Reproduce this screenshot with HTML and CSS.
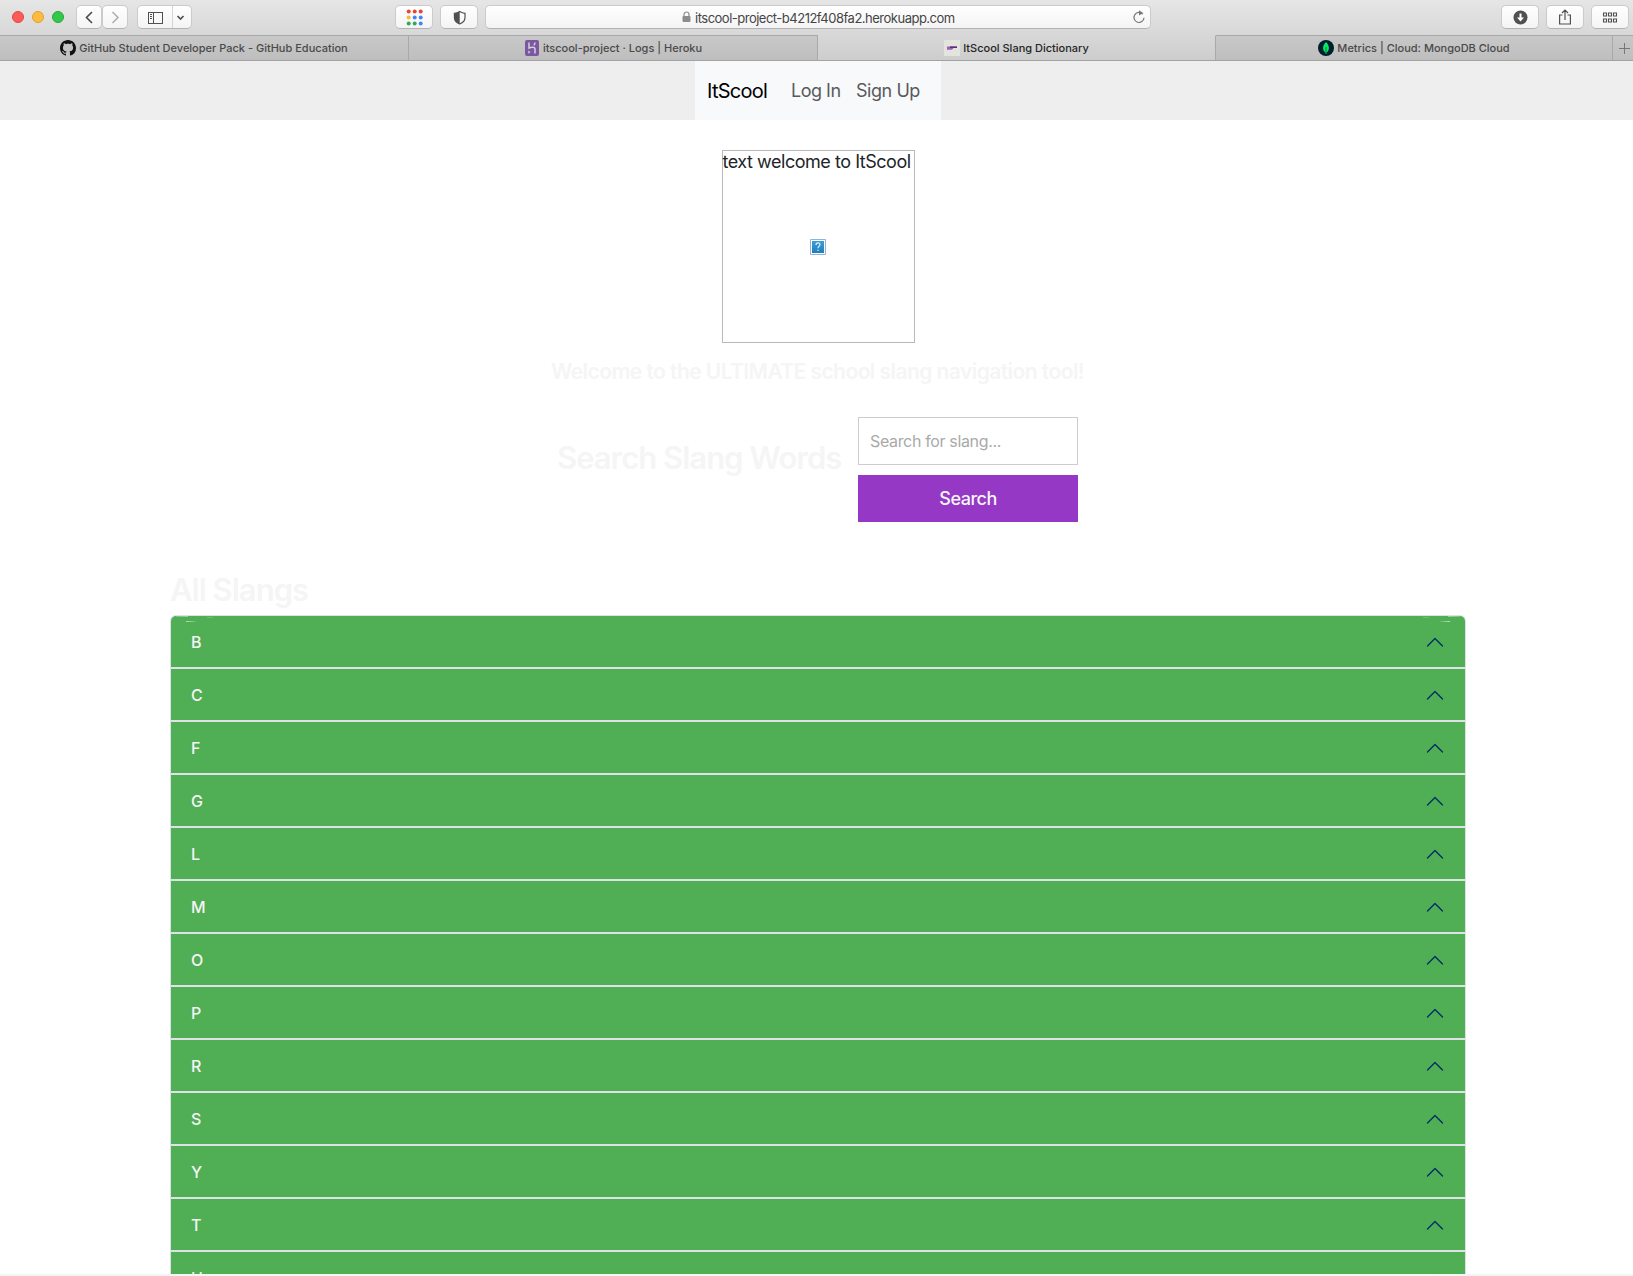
FILE: index.html
```
<!DOCTYPE html>
<html lang="en">
<head>
<meta charset="utf-8">
<title>ItScool Slang Dictionary</title>
<link rel="stylesheet" href="styles.css">
</head>
<body>
<header class="browser">
  <div class="toolbar">
    <div class="lights"><i class="light red"></i><i class="light amber"></i><i class="light green"></i></div>
    <div class="history">
      <span class="btn nav"><svg width="26" height="23" viewBox="0 0 26 23" fill="none" stroke="#4a4a4a" stroke-width="1.6"><path d="M16 6l-5.500 5.500L16 17"/></svg></span>
      <span class="btn nav"><svg width="26" height="23" viewBox="0 0 26 23" fill="none" stroke="#a8a8a8" stroke-width="1.400"><path d="M10.500 6l5.500 5.500L10.500 17"/></svg></span>
    </div>
    <span class="btn sidebar">
      <svg width="54" height="23" viewBox="0 0 54 23" fill="none" stroke="#505050"><rect x="10.500" y="6.500" width="14" height="11"/><path d="M15.500 6v12M12 8.500h2M12 10.500h2M12 12.500h2"/><path stroke="#d4d4d4" d="M34.500 0v23"/><path stroke-width="1.700" d="M39.500 10l3 3 3-3"/></svg>
    </span>
    <span class="btn tool apps"><svg width="38" height="23" viewBox="0 0 38 23"><g transform="translate(.7)"><g fill="#ea4335"><circle cx="13" cy="5.500" r="2"/><circle cx="19" cy="5.500" r="2"/><circle cx="25" cy="5.500" r="2"/></g><circle cx="13" cy="11.500" r="2" fill="#fbbc2c"/><g fill="#4285f4"><circle cx="19" cy="11.500" r="2"/><circle cx="25" cy="11.500" r="2"/><circle cx="25" cy="17.500" r="2"/></g><g fill="#34a853"><circle cx="13" cy="17.500" r="2"/><circle cx="19" cy="17.500" r="2"/></g></g></svg></span>
    <span class="btn tool shield"><svg width="38" height="23" viewBox="0 0 38 23"><g transform="translate(.7)"><path d="M19 5.500c2 1.300 3.500 1.700 5.300 1.800v4.200c0 3.200-2.200 5.300-5.300 6.500-3.100-1.200-5.300-3.300-5.300-6.500V7.300c1.800-.1 3.300-.5 5.300-1.800z" fill="none" stroke="#505050" stroke-width="1.200"/><path d="M19 5.500V18c-3.100-1.200-5.300-3.300-5.300-6.500V7.300c1.800-.1 3.300-.5 5.300-1.800z" fill="#505050"/></g></svg></span>
    <div class="btn url">
      <svg class="lock" width="9" height="12" viewBox="0 0 9 12"><rect x="0.500" y="5" width="8" height="6" rx="1" fill="#8c8c8c"/><path d="M2 5.500V3.500a2.500 2.500 0 0 1 5 0v2" fill="none" stroke="#8c8c8c" stroke-width="1.200"/></svg>
      <span class="address">itscool-project-b4212f408fa2.herokuapp.com</span>
      <svg class="reload" width="14" height="15" viewBox="0 0 14 15"><path d="M10.800 4.200A5 5 0 1 0 12 7.700M7 3h1" fill="none" stroke="#777" stroke-width="1.200"/><path d="M7 .3 11.200 3 7 5.600z" fill="#777"/></svg>
    </div>
    <span class="btn tool download"><svg width="38" height="23" viewBox="0 0 38 23"><circle cx="19.500" cy="11.500" r="7" fill="#505050"/><path d="M18.500 7.500h2v4H23l-3.500 4-3.500-4h2.500z" fill="#fff"/></svg></span>
    <span class="btn tool"><svg width="38" height="23" viewBox="0 0 38 23" fill="none" stroke="#505050" stroke-width="1.200"><path d="M16.500 9H13.600v9h10.800V9h-2.900M19 14V4.500M16 7l3-3 3 3"/></svg></span>
    <span class="btn tool"><svg width="38" height="23" viewBox="0 0 38 23" fill="none" stroke="#505050" stroke-width="1.100"><path d="M12.500 7h3v3h-3zM17.500 7h3v3h-3zM22.500 7h3v3h-3zM12.500 13h3v3h-3zM17.500 13h3v3h-3zM22.500 13h3v3h-3z"/></svg></span>
  </div>
  <nav class="tabs">
    <div class="tab t1"><svg width="16" height="16" viewBox="0 0 16 16"><path fill="#111" d="M8 0C3.580 0 0 3.580 0 8c0 3.540 2.290 6.530 5.470 7.590.4.070.55-.17.55-.38 0-.19-.01-.82-.01-1.490-2.010.37-2.530-.49-2.690-.94-.09-.23-.48-.94-.82-1.130-.28-.15-.68-.52-.01-.53.63-.01 1.080.58 1.230.82.72 1.210 1.870.87 2.330.66.070-.52.28-.87.51-1.070-1.780-.2-3.640-.89-3.640-3.950 0-.87.31-1.590.82-2.150-.08-.2-.36-1.020.08-2.120 0 0 .67-.21 2.200.82.64-.18 1.320-.27 2-.27s1.360.09 2 .27c1.530-1.040 2.200-.82 2.200-.82.44 1.100.16 1.920.08 2.120.51.56.82 1.270.82 2.150 0 3.070-1.870 3.750-3.650 3.950.29.25.54.73.54 1.480 0 1.070-.01 1.930-.01 2.200 0 .21.15.46.55.38A8 8 0 0 0 16 8c0-4.420-3.580-8-8-8z"/></svg><span>GitHub Student Developer Pack - GitHub Education</span></div>
    <div class="tab t2"><svg width="14" height="16" viewBox="0 0 14 16"><rect width="14" height="16" rx="2" fill="#79589f"/><path d="M4 2.500V8c2-1 6-1.500 6 1V13.500M10 2.500c0 1-.5 2-1.200 2.800" fill="none" stroke="#d8cde2" stroke-width="1.500"/><path d="M3.300 10.500 5.500 12l-2.200 1.700z" fill="#d8cde2"/></svg><span>itscool-project · Logs | Heroku</span></div>
    <div class="tab t3"><svg width="16" height="16" viewBox="0 0 16 16"><path fill="#e4e4df" d="M0 0h16v16H0z"/><path fill="#a05cc0" d="M3 6.500h10V8H9.500L8 9.700H3z"/><path fill="#4b2467" d="M6 6.500h7v1.300H6z"/></svg><span>ItScool Slang Dictionary</span></div>
    <div class="tab t4"><svg width="16" height="16" viewBox="0 0 16 16"><circle cx="8" cy="8" r="8" fill="#001e2b"/><path d="M8 2c2 2 2.900 4 2.900 6 0 2.200-1 3.500-2.300 4.500L8.300 14h-.6l-.3-1.500C6.100 11.500 5.100 10.200 5.100 8c0-2 .9-4 2.900-6z" fill="#00ed64"/><path d="M8 7v7" stroke="#087541"/></svg><span>Metrics | Cloud: MongoDB Cloud</span></div>
    <div class="tab plus"><svg width="12" height="12" viewBox="0 0 12 12"><path d="M6.500 1v11M1 6.500h11" stroke="#777" fill="none"/></svg></div>
  </nav>
</header>
<div class="site-header">
  <nav class="navbar"><a class="brand">ItScool</a><a class="login">Log In</a><a class="signup">Sign Up</a></nav>
</div>
<main class="main">
  <section class="hero">
    <div class="missing">
      <span class="alt">text welcome to ItScool</span>
      <svg class="broken" width="16" height="16" viewBox="0 0 16 16"><defs><linearGradient id="b" x2="0" y2="1"><stop stop-color="#3ba0d5"/><stop offset="1" stop-color="#237dbb"/></linearGradient></defs><path fill="#fff" stroke="#8fb3da" d="M.5.5h15v15H.5z"/><path fill="url(#b)" d="M2 2h12v12H2z"/><path d="M6 6c0-2.700 4-2.700 4-.4C10 7.200 8 7.300 8 9.200M8 10.700v1.300" fill="none" stroke="#d9effb" stroke-width="1.200"/></svg>
    </div>
    <h1 class="welcome">Welcome to the ULTIMATE school slang navigation tool!</h1>
  </section>
  <section class="search">
    <h2 class="search-title">Search Slang Words</h2>
    <form class="search-form">
      <input class="field" type="text" placeholder="Search for slang...">
      <button class="submit" type="button">Search</button>
    </form>
  </section>
  <section class="slangs">
    <h2 class="slangs-title">All Slangs</h2>
    <div class="accordion">
      <div class="row first"><span>B</span><svg class="chev"><use href="#chev"/></svg></div>
      <div class="row"><span>C</span><svg class="chev"><use href="#chev"/></svg></div>
      <div class="row"><span>F</span><svg class="chev"><use href="#chev"/></svg></div>
      <div class="row"><span>G</span><svg class="chev"><use href="#chev"/></svg></div>
      <div class="row"><span>L</span><svg class="chev"><use href="#chev"/></svg></div>
      <div class="row"><span>M</span><svg class="chev"><use href="#chev"/></svg></div>
      <div class="row"><span>O</span><svg class="chev"><use href="#chev"/></svg></div>
      <div class="row"><span>P</span><svg class="chev"><use href="#chev"/></svg></div>
      <div class="row"><span>R</span><svg class="chev"><use href="#chev"/></svg></div>
      <div class="row"><span>S</span><svg class="chev"><use href="#chev"/></svg></div>
      <div class="row"><span>Y</span><svg class="chev"><use href="#chev"/></svg></div>
      <div class="row"><span>T</span><svg class="chev"><use href="#chev"/></svg></div>
      <div class="row"><span>U</span><svg class="chev"><use href="#chev"/></svg></div>
    </div>
  </section>
</main>
<footer class="edge"></footer>
<svg class="symbols"><symbol id="chev" viewBox="0 0 20 20"><path d="M2.500 14 10 6.500 17.500 14" fill="none" stroke="#052c65" stroke-width="1.300" stroke-linecap="round" stroke-linejoin="round"/></symbol></svg>
</body>
</html>
```
FILE: styles.css
```
* { box-sizing: border-box; }
body { margin: 0; height: 1276px; overflow: hidden; display: flex; flex-direction: column; background: #fff; color: #212529; font-family: Inter, "Liberation Sans", sans-serif; }
svg { display: block; flex: none; }
h1, h2 { margin: 0; white-space: nowrap; color: #f5f5f5; }
.symbols { display: none; }

.browser { height: 61px; flex: none; background: linear-gradient(#e6e6e6, #cdcdcd); border-bottom: 1px solid #a3a3a3; }
.toolbar { height: 35px; display: flex; align-items: flex-start; padding: 5px 4px 0 12px; }
.lights { display: flex; gap: 8px; padding-top: 6px; margin-right: 12px; }
.light { width: 12px; height: 12px; border-radius: 50%; border: 1px solid; }
.red { background: #fc5b57; border-color: #e2463f; }
.amber { background: #fdbc40; border-color: #e0a032; }
.green { background: #34c84a; border-color: #24aa35; }
.btn { height: 24px; flex: none; border-radius: 5px; background: linear-gradient(#fff, #f4f4f4); border: 1px solid #cbcbcb; border-bottom-color: #b3b3b3; display: flex; align-items: center; justify-content: center; overflow: hidden; }
.history { display: flex; margin-right: 9px; }
.nav { width: 26px; }
.sidebar { width: 55px; margin-right: 203px; }
.tool { width: 38px; margin-right: 7px; }
.tool:last-child { margin-right: 0; }
.url { width: 666px; margin-right: 350px; padding: 0 4px 0 196px; justify-content: flex-start; }
.lock { margin-right: 4px; }
.address { font-size: 13px; letter-spacing: -0.5px; color: #454545; white-space: nowrap; padding-top: 1px; }
.reload { margin-left: auto; }

.tabs { height: 25px; display: grid; grid-template-columns: 409px 409px 398px 397px 1fr; }
.tab { display: flex; align-items: center; justify-content: center; gap: 3px; border-top: 1px solid #a9a9a9; border-right: 1px solid #a9a9a9; background: linear-gradient(#c8c8c8, #bebebe); font-size: 11px; font-weight: 500; color: #4a4a4a; white-space: nowrap; overflow: hidden; }
.t2 { padding-left: 1px; gap: 4px; }
.t3 { background: none; border-top-color: transparent; color: #262626; }
.plus { border-right: 0; padding-left: 2px; }

.site-header { height: 59px; flex: none; background: #eee; display: flex; padding-left: 695px; }
.navbar { width: 246px; height: 59px; background: #f8f9fa; display: flex; align-items: center; padding-left: 12px; white-space: nowrap; font-size: 18px; color: #595a5c; }
.brand { font-size: 20px; color: #000; width: 84px; letter-spacing: -0.75px; padding-top: 1px; }
.login { width: 65px; letter-spacing: -0.5px; }
.signup { letter-spacing: -0.45px; }

.main { flex: 1; min-height: 0; overflow: hidden; padding: 30px 167px 0 170px; }
.hero { display: flex; flex-direction: column; align-items: center; }
.missing { width: 193px; height: 193px; border: 1px solid #b9b9b9; display: grid; grid-template-rows: 24px 1fr; justify-items: center; }
.alt { justify-self: start; font-size: 18px; line-height: 22px; letter-spacing: -0.47px; white-space: nowrap; }
.broken { margin-top: 64px; }
.welcome { font-size: 21px; line-height: 26px; font-weight: 600; letter-spacing: -0.56px; margin: 16px 1px 0 0; }
.search { display: flex; padding: 32px 0 0 387px; height: 185px; }
.search-title { width: 301px; font-size: 31px; line-height: 40px; font-weight: 600; letter-spacing: -1px; margin-top: 21px; }
.search-form { width: 220px; display: grid; grid-template-rows: 48px 47px; gap: 10px; align-content: start; }
.field, .submit { width: 220px; margin: 0; border-radius: 0; font-family: inherit; }
.field { border: 1px solid #ccc; padding: 0 11px; font-size: 16px; letter-spacing: -0.35px; background: #fff; }
.field::placeholder { color: #a9a9a9; opacity: 1; }
.submit { border: 0; background: #9638c6; color: #f5f5f5; font-size: 18px; font-weight: 500; letter-spacing: -0.5px; }
.slangs-title { font-size: 31px; line-height: 40px; font-weight: 600; letter-spacing: -1px; margin-bottom: 5px; }
.accordion { border: 1px solid #dee2e6; border-bottom: 0; border-radius: 6px 6px 0 0; overflow: hidden; }
.row { height: 53px; background: #50ae55; border-bottom: 2px solid #dee2e6; display: flex; align-items: center; justify-content: space-between; padding: 0 20px; color: #f5f5f5; font-size: 16px; font-weight: 500; }
.chev { width: 20px; height: 20px; }
.first { background-image: linear-gradient(90deg, #79c27c, #9ad09c), linear-gradient(90deg, #b7deb9, #66b86a), linear-gradient(#70be74, #70be74), linear-gradient(90deg, #66b86a, #b7deb9), linear-gradient(90deg, #9ad09c, #79c27c), linear-gradient(#70be74, #70be74); background-repeat: no-repeat; background-size: 12px 1px, 10px 1px, 6px 1px, 10px 1px, 12px 1px, 6px 1px; background-position: 5px 0, 15px 5px, 36px 1px, calc(100% - 15px) 5px, calc(100% - 5px) 0, calc(100% - 36px) 1px; }
.edge { height: 2px; flex: none; background: #f4f4f4; }
```
